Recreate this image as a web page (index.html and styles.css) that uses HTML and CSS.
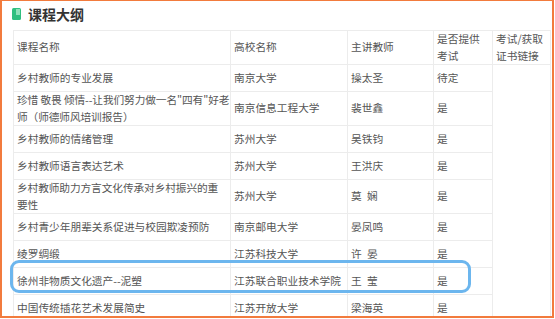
FILE: index.html
```html
<!DOCTYPE html>
<html lang="zh">
<head>
<meta charset="utf-8">
<link rel="stylesheet" href="styles.css">
</head>
<body>
<div class="frame">
  <div class="title">
    <svg class="title-icon" width="9" height="12" viewBox="0 0 9 12"><rect x="0" y="0" width="9" height="12" rx="1.5" fill="#2fbf7f"/><rect x="4" y="1" width="4" height="6" fill="#8fe0b9"/></svg>
    <span>课程大纲</span>
  </div>
  <table class="outline">
    <colgroup>
      <col class="c1"><col class="c2"><col class="c3"><col class="c4"><col class="c5">
    </colgroup>
    <thead>
      <tr>
        <th>课程名称</th>
        <th>高校名称</th>
        <th>主讲教师</th>
        <th>是否提供<br>考试</th>
        <th>考试/获取<br>证书链接</th>
      </tr>
    </thead>
    <tbody>
      <tr><td>乡村教师的专业发展</td><td>南京大学</td><td>操太圣</td><td>待定</td><td rowspan="9" class="link"></td></tr>
      <tr class="tall"><td class="nowrap">珍惜 敬畏 倾情--让我们努力做一名"四有"好老<br>师（师德师风培训报告）</td><td>南京信息工程大学</td><td>裴世鑫</td><td>是</td></tr>
      <tr><td>乡村教师的情绪管理</td><td>苏州大学</td><td>吴铁钧</td><td>是</td></tr>
      <tr><td>乡村教师语言表达艺术</td><td>苏州大学</td><td>王洪庆</td><td>是</td></tr>
      <tr class="tall"><td class="nowrap">乡村教师助力方言文化传承对乡村振兴的重<br>要性</td><td>苏州大学</td><td>莫&ensp;娴</td><td>是</td></tr>
      <tr><td>乡村青少年朋辈关系促进与校园欺凌预防</td><td>南京邮电大学</td><td>晏凤鸣</td><td>是</td></tr>
      <tr><td>绫罗绸缎</td><td>江苏科技大学</td><td>许&ensp;晏</td><td>是</td></tr>
      <tr><td>徐州非物质文化遗产--泥塑</td><td>江苏联合职业技术学院</td><td>王&ensp;莹</td><td>是</td></tr>
      <tr><td>中国传统插花艺术发展简史</td><td>江苏开放大学</td><td>梁海英</td><td>是</td></tr>
    </tbody>
  </table>
  <div class="highlight"></div>
</div>
</body>
</html>
```

FILE: styles.css
```css
html, body {
  margin: 0;
  padding: 0;
  background: #ffffff;
}
.frame {
  position: relative;
  box-sizing: border-box;
  width: 554px;
  height: 318px;
  border: 2px solid #f27b3d;
  border-top-width: 1px;
  overflow: hidden;
  font-family: "Microsoft YaHei", "Noto Sans CJK SC", "Noto Sans", sans-serif;
  color: #555;
}
.title {
  display: flex;
  align-items: center;
  gap: 7px;
  height: 24px;
  padding-left: 10px;
  padding-top: 1px;
  font-size: 14px;
  font-weight: bold;
  color: #333;
}
.title-icon {
  display: block;
}
.outline {
  margin-left: 11px;
  margin-top: 4px;
  width: 537px;
  border-collapse: collapse;
  table-layout: fixed;
  font-size: 10.7px;
  line-height: 16.5px;
}
.c1 { width: 217px; }
.c2 { width: 117px; }
.c3 { width: 86px; }
.c4 { width: 59px; }
.c5 { width: 58px; }
.outline th,
.outline td {
  border: 1px solid #ececec;
  padding: 0 3px;
  text-align: left;
  font-weight: normal;
  vertical-align: middle;
  height: 26px;
}
.outline th {
  height: 32px;
}
.outline tr.tall td {
  height: 33px;
}
.outline td.nowrap {
  white-space: nowrap;
  letter-spacing: -0.1px;
}
.outline td.link {
  vertical-align: top;
}
.highlight {
  position: absolute;
  left: 8px;
  top: 259px;
  width: 455px;
  height: 27px;
  border: 3px solid #6cb6ee;
  border-radius: 9px;
}
```
